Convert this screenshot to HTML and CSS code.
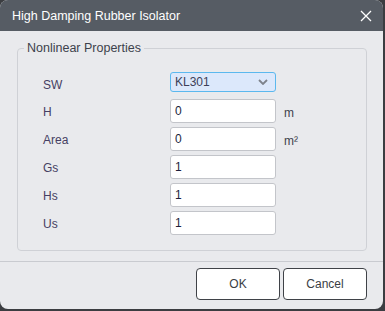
FILE: index.html
```html
<!DOCTYPE html>
<html lang="en">
<head>
  <meta charset="UTF-8">
  <meta name="viewport" content="width=device-width, initial-scale=1.0">
  <title>High Damping Rubber Isolator</title>
  <link rel="stylesheet" href="styles.css">
</head>
<body>

<div class="dialog">
  <div class="titlebar">
    <span class="title">High Damping Rubber Isolator</span>
    <svg class="close" width="12" height="12" viewBox="0 0 12 12">
      <path d="M1 1 L11 11 M11 1 L1 11" stroke="#fff" stroke-width="1.3" fill="none"/>
    </svg>
  </div>

  <div class="content">
    <fieldset class="group">
      <legend>Nonlinear Properties</legend>

      <div class="row first">
        <label>SW</label>
        <div class="select">
          <span>KL301</span>
          <svg width="10" height="6" viewBox="0 0 10 6">
            <path d="M1 1 L5 5 L9 1" stroke="#7d828b" stroke-width="1.8" fill="none"/>
          </svg>
        </div>
      </div>
      <div class="row">
        <label>H</label>
        <input type="text" value="0">
        <span class="unit">m</span>
      </div>
      <div class="row">
        <label>Area</label>
        <input type="text" value="0">
        <span class="unit">m²</span>
      </div>
      <div class="row">
        <label>Gs</label>
        <input type="text" value="1">
      </div>
      <div class="row">
        <label>Hs</label>
        <input type="text" value="1">
      </div>
      <div class="row">
        <label>Us</label>
        <input type="text" value="1">
      </div>
    </fieldset>
  </div>

  <div class="footer">
    <button>OK</button>
    <button>Cancel</button>
  </div>
</div>

</body>
</html>
```

FILE: styles.css
```css
body { margin: 0; background-color: #3b3d41; font-family: "Liberation Sans", Arial, sans-serif; font-size: 12px; }
.dialog { width: 383px; height: 309px; background-color: #e9eaed; border-radius: 8px; overflow: hidden; }
.titlebar { height: 31px; background-color: #565c64; display: flex; align-items: center; justify-content: space-between; padding: 0 11px 0 12px; color: #fff; }
.title { font-size: 12.5px; }
.content { padding: 9px 16px 0 17px; }
.group { margin: 0; border: 1px solid #cfd1d6; border-radius: 4px; padding: 16px 0 15px 25px; display: flex; flex-direction: column; gap: 4px; }
.group legend { color: #3d424c; padding: 0 3px; margin-left: -19px; line-height: 16px; font-size: 12.5px; }
.row { display: flex; align-items: center; height: 24px; }
.row.first { height: 23px; align-items: flex-start; }
.row label { width: 127px; color: #463f63; padding-top: 2px; }
.row.first label { padding-top: 6px; }
input { box-sizing: border-box; width: 106px; height: 24px; border: 1px solid #c3c5ca; border-radius: 3px; background: #fff; padding: 0 4px; font-family: inherit; font-size: 12px; color: #1c1f3c; }
.select { box-sizing: border-box; width: 106px; height: 20px; border: 1px solid #5bb8ee; border-radius: 3px; background-color: #dce8fb; display: flex; align-items: center; justify-content: space-between; padding: 0 7px 0 4px; color: #3d3f58; }
.unit { margin-left: 8px; color: #3d424c; padding-top: 4px; }
.footer { margin-top: 10px; border-top: 1px solid #c9cbd0; display: flex; justify-content: flex-end; gap: 3px; padding: 6px 16px 0 0; }
button { width: 84px; height: 32px; background-color: #fff; border: 1px solid #3f4247; border-radius: 4px; font-family: inherit; font-size: 12px; color: #3a3d44; }
```
